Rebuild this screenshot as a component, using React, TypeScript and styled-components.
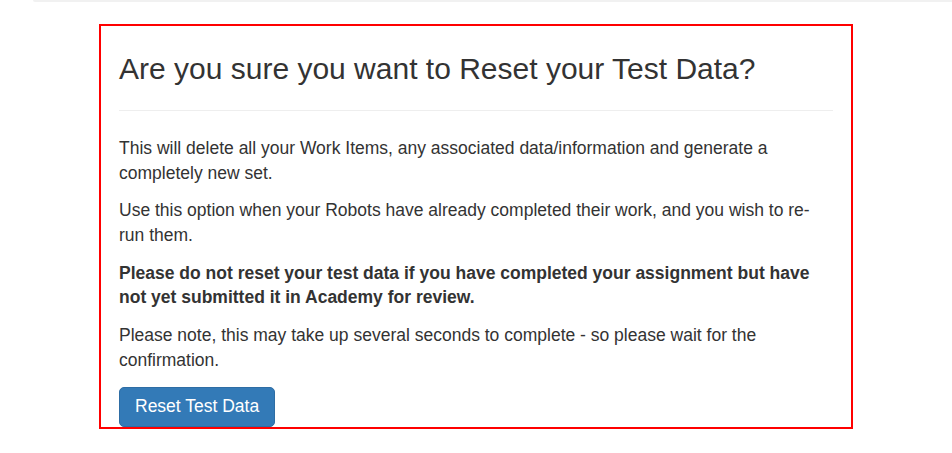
import React from "react";
import styled, { createGlobalStyle } from "styled-components";

const GlobalStyle = createGlobalStyle`
  html, body {
    margin: 0;
    padding: 0;
    background: #ffffff;
  }
  body {
    font-family: "Liberation Sans", Arial, Helvetica, sans-serif;
    color: #333333;
  }
  * { box-sizing: border-box; }
`;

const Page = styled.div`
  width: 952px;
  min-height: 453px;
  background: #ffffff;
`;

const TopStrip = styled.div`
  margin-left: 33px;
  height: 2px;
  background: #f1f1f1;
  border-bottom-left-radius: 3px;
`;

const Panel = styled.section`
  margin: 22px 0 0 99px;
  width: 754px;
  height: 405px;
  border: 2px solid #ff0000;
  padding: 26px 18px 0 18px;
  display: flex;
  flex-direction: column;
  align-items: flex-start;
`;

const Title = styled.h3`
  margin: 0 0 25px 0;
  padding: 0 0 25px 0;
  width: 100%;
  border-bottom: 1px solid #eeeeee;
  font-size: 30px;
  line-height: 33px;
  font-weight: 400;
  color: #333333;
`;

const Paragraph = styled.p<{ $bold?: boolean }>`
  margin: 0 0 13.4px 0;
  font-size: 17.5px;
  line-height: 24.5px;
  font-weight: ${(p) => (p.$bold ? 700 : 400)};
  color: #333333;
`;

const PrimaryButton = styled.button`
  margin-top: 1px;
  height: 42px;
  padding: 0 15px;
  font-family: inherit;
  font-size: 17.5px;
  line-height: 25px;
  color: #ffffff;
  background: #337ab7;
  border: 1px solid #2e6da4;
  border-radius: 5px;
  cursor: pointer;
`;

export default function App() {
  return (
    <Page>
      <GlobalStyle />
      <TopStrip />
      <Panel>
        <Title>Are you sure you want to Reset your Test Data?</Title>
        <Paragraph>
          This will delete all your Work Items, any associated data/information and generate a
          completely new set.
        </Paragraph>
        <Paragraph>
          Use this option when your Robots have already completed their work, and you wish to
          re-run them.
        </Paragraph>
        <Paragraph $bold>
          Please do not reset your test data if you have completed your assignment but have not
          yet submitted it in Academy for review.
        </Paragraph>
        <Paragraph>
          Please note, this may take up several seconds to complete - so please wait for the
          confirmation.
        </Paragraph>
        <PrimaryButton>Reset Test Data</PrimaryButton>
      </Panel>
    </Page>
  );
}
